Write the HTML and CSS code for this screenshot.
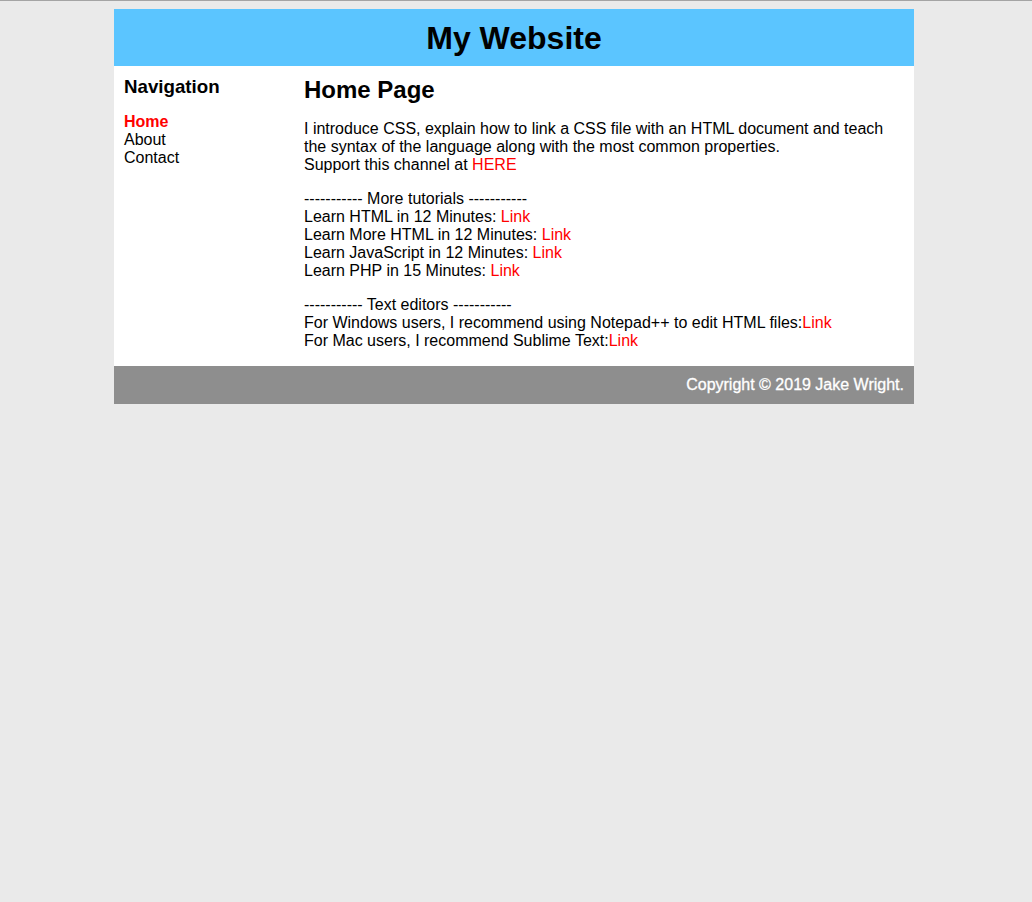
FILE: index.html
```html
<!DOCTYPE html>
<html lang="en">
<head>
<meta charset="utf-8">
<title>My Website</title>
<link rel="stylesheet" href="styles.css">
</head>
<body>
<div class="page">
  <header class="site-header">
    <h1 class="site-title">My Website</h1>
  </header>
  <div class="content">
    <nav class="sidebar">
      <h3 class="sidebar-title">Navigation</h3>
      <ul class="nav-list">
        <li><a class="nav-link active" href="#">Home</a></li>
        <li><a class="nav-link" href="#">About</a></li>
        <li><a class="nav-link" href="#">Contact</a></li>
      </ul>
    </nav>
    <main class="main">
      <h2 class="page-title">Home Page</h2>
      <p class="para">I introduce CSS, explain how to link a CSS file with an HTML document and teach the syntax of the language along with the most common properties.<br>Support this channel at <a class="link" href="#">HERE</a></p>
      <p class="para">----------- More tutorials -----------<br>Learn HTML in 12 Minutes: <a class="link" href="#">Link</a><br>Learn More HTML in 12 Minutes: <a class="link" href="#">Link</a><br>Learn JavaScript in 12 Minutes: <a class="link" href="#">Link</a><br>Learn PHP in 15 Minutes: <a class="link" href="#">Link</a></p>
      <p class="para">----------- Text editors -----------<br>For Windows users, I recommend using Notepad++ to edit HTML files:<a class="link" href="#">Link</a><br>For Mac users, I recommend Sublime Text:<a class="link" href="#">Link</a></p>
    </main>
  </div>
  <footer class="site-footer">Copyright © 2019 Jake Wright.</footer>
</div>
</body>
</html>
```
FILE: styles.css
```css
html, body {
  margin: 0;
  padding: 0;
}
body {
  background: #eaeaea;
  border-top: 1px solid #a4a4a4;
  padding-top: 8px;
  min-height: 893px;
  box-sizing: border-box;
  font-family: "Liberation Sans", Arial, Helvetica, sans-serif;
  font-size: 16px;
  line-height: 18px;
  color: #000;
}
.page {
  width: 800px;
  margin-left: calc(50% - 402px);
}
.site-header {
  background: #5bc5ff;
  height: 57px;
  display: flex;
  align-items: center;
  justify-content: center;
}
.site-title {
  margin: 0;
  font-size: 32px;
  line-height: 37px;
  font-weight: bold;
  padding-top: 1px;
}
.content {
  background: #fff;
  display: flex;
  height: 300px;
}
.sidebar {
  width: 160px;
  padding: 10px 10px 0;
  flex: none;
}
.sidebar-title {
  margin: 0 0 15px;
  font-size: 18.72px;
  line-height: 22px;
  font-weight: bold;
}
.nav-list {
  list-style: none;
  margin: 0;
  padding: 0;
}
.nav-link {
  color: #000;
  text-decoration: none;
}
.nav-link.active {
  color: #ff0000;
  font-weight: bold;
}
.main {
  flex: 1;
  padding: 10px 10px 0;
}
.page-title {
  margin: 0 0 16px;
  font-size: 24px;
  line-height: 28px;
  font-weight: bold;
}
.para {
  margin: 0 0 16px;
}
.link {
  color: #ff0000;
  text-decoration: none;
}
.site-footer {
  background: #8e8e8e;
  color: #fff;
  text-align: right;
  padding: 10px 10px;
  height: 38px;
  box-sizing: border-box;
  -webkit-text-stroke: 0.3px #fff;
}
```
